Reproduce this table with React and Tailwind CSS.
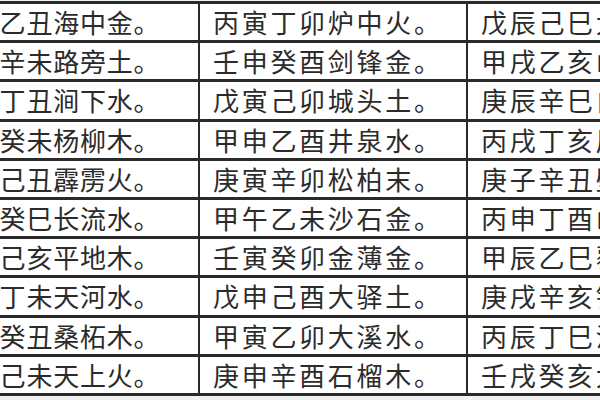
const rows = [
  ["甲子乙丑海中金。", "丙寅丁卯炉中火。", "戊辰己巳大林木。"],
  ["庚午辛未路旁土。", "壬申癸酉剑锋金。", "甲戌乙亥山头火。"],
  ["丙子丁丑涧下水。", "戊寅己卯城头土。", "庚辰辛巳白蜡金。"],
  ["壬午癸未杨柳木。", "甲申乙酉井泉水。", "丙戌丁亥屋上土。"],
  ["戊子己丑霹雳火。", "庚寅辛卯松柏末。", "庚子辛丑壁上土。"],
  ["壬辰癸巳长流水。", "甲午乙未沙石金。", "丙申丁酉山下火。"],
  ["戊戌己亥平地木。", "壬寅癸卯金薄金。", "甲辰乙巳覆灯火。"],
  ["丙午丁未天河水。", "戊申己酉大驿土。", "庚戌辛亥钗钏金。"],
  ["壬子癸丑桑柘木。", "甲寅乙卯大溪水。", "丙辰丁巳沙中土。"],
  ["戊午己未天上火。", "庚申辛酉石榴木。", "壬戌癸亥大海水。"],
];

const cellBase =
  "w-[268px] shrink-0 border-r-2 border-[#2a2a2a] flex items-center overflow-hidden whitespace-nowrap text-[26px] leading-none text-[#2b2b2b] font-normal";

export default function App() {
  return (
    <div className="w-[600px] h-[400px] overflow-hidden bg-[#f1f1f1]">
      <div
        className="ml-[-68px] mt-[1px] w-[804px] border-t-[3px] border-[#2a2a2a] bg-white"
        style={{ fontFamily: '"Noto Sans CJK SC", "Noto Sans CJK JP", sans-serif' }}
      >
        {rows.map((r, i) => (
          <div key={i} className="flex h-[39.2px] border-b-[3px] border-[#2a2a2a]">
            <div className={cellBase + " pl-[14px] tracking-[0.8px]"}>{r[0]}</div>
            <div className={cellBase + " pl-[13px] tracking-[2.7px]"}>{r[1]}</div>
            <div className={cellBase + " pl-[13px] tracking-[2.7px]"}>{r[2]}</div>
          </div>
        ))}
      </div>
    </div>
  );
}
